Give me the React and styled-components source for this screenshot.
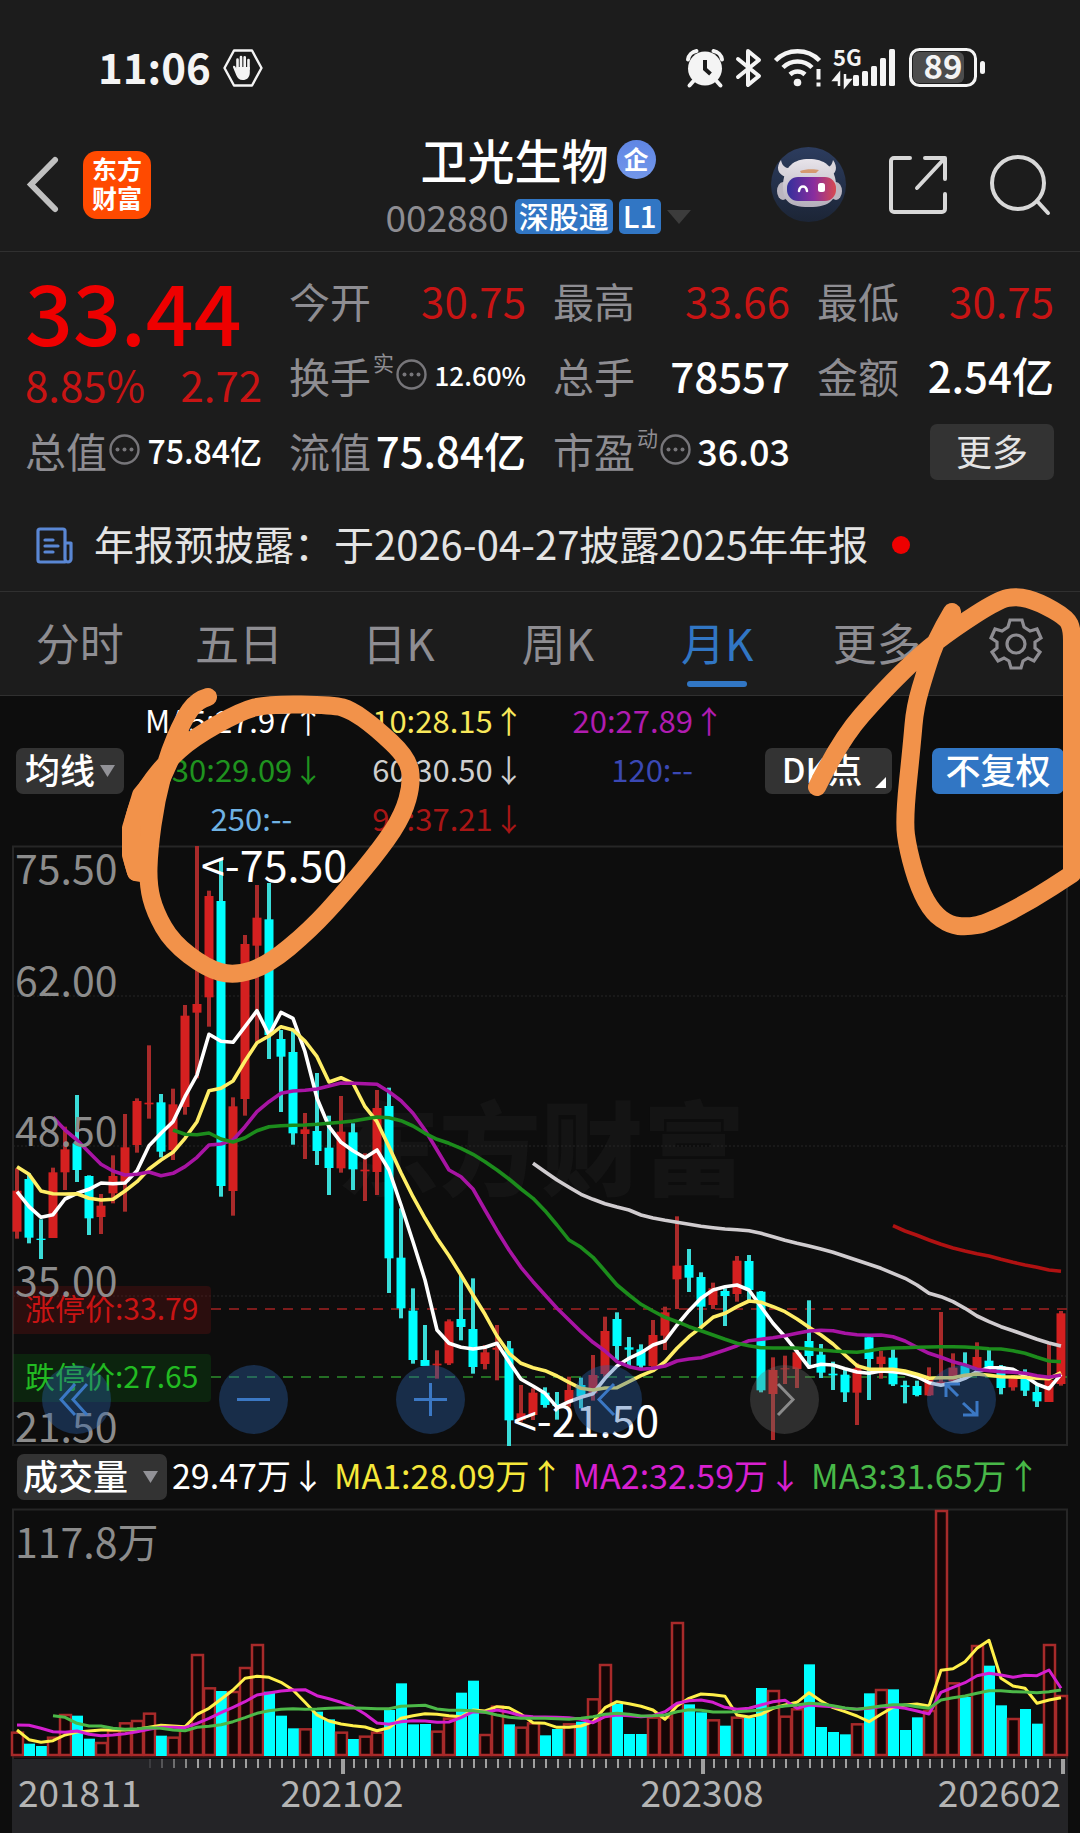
import React from "react";
import styled, { createGlobalStyle } from "styled-components";

const FONT = '"Noto Sans CJK SC", "Noto Sans", sans-serif';

const C = {
  panel: "#1c1c1c",
  board: "#0d0d0d",
  line: "#303030",
  grey: "#8e8d92",
  light: "#e4e4e4",
  blue: "#3176c4",
  red: "#c81414",
  hot: "#ee0000",
  chip: "#333333",
};

const GlobalStyle = createGlobalStyle`
  *, *::before, *::after { box-sizing: border-box; }
  body { margin: 0; background: ${C.board}; }
  button, select { font: inherit; color: inherit; border: 0; padding: 0; margin: 0; background: none; cursor: pointer; }
  a { color: inherit; text-decoration: none; }
  svg { display: block; overflow: visible; }
`;

/* ---------- market data ---------- */

// high, body top, body bottom, low (thirds of a pixel below the 63.41 level), u = up month, d = down month
const CANDLES = `565 632 755 776 u|580 597 773 790 d|718 776 780 837 d|563 577 774 774 u|440 508 577 630 u|345 490 570 606 d|586 588 715 765 d|642 677 711 762 u|526 588 640 670 u|402 502 605 695 u|355 363 495 518 u|196 368 373 416 u|342 367 515 532 d|326 373 510 540 u|75 107 381 404 u|-402 72 98 295 u|-268 -252 52 140 u|-365 -237 618 650 d|352 379 633 707 u|-135 -108 357 407 u|-285 -187 -103 185 u|-291 -182 165 237 d|150 177 230 396 d|150 216 460 494 d|399 448 462 537 u|279 453 513 555 d|407 503 564 645 d|348 455 565 578 u|430 457 568 630 d|520 569 574 663 u|330 384 576 645 u|323 378 835 939 d|685 833 985 1015 d|925 992 1140 1151 d|1035 1140 1158 1158 d|1111 1151 1156 1196 u|1018 1024 1150 1155 u|885 1017 1041 1081 d|895 1047 1161 1181 d|1095 1117 1152 1168 u|1035 1103 1109 1201 u|1083 1105 1321 1398 d|1215 1300 1320 1325 u|1225 1238 1305 1320 u|1222 1238 1275 1283 d|1236 1272 1278 1319 d|1190 1230 1265 1280 u|1193 1215 1250 1285 d|1125 1185 1240 1262 u|1010 1053 1182 1190 u|997 1017 1098 1140 d|1071 1102 1109 1160 d|1093 1108 1157 1165 d|1020 1065 1158 1165 u|980 997 1067 1110 u|709 857 898 987 u|807 855 893 936 d|877 891 980 1045 d|908 925 975 987 u|925 933 948 1038 d|828 842 942 965 u|825 843 930 965 d|933 935 1231 1237 d|1132 1170 1242 1380 u|1127 1165 1168 1212 u|1110 1117 1167 1224 u|961 1083 1128 1165 d|1092 1124 1178 1194 d|1145 1181 1186 1230 d|1165 1184 1237 1266 d|1150 1165 1238 1335 u|1072 1072 1137 1260 d|1112 1130 1152 1196 u|1102 1133 1213 1218 d|1202 1216 1221 1270 d|1202 1218 1245 1249 d|1162 1197 1246 1248 u|996 1205 1210 1215 u|1120 1163 1203 1205 u|1117 1158 1185 1190 d|1087 1131 1170 1180 u|1108 1142 1168 1172 d|1155 1158 1224 1243 d|1185 1195 1222 1232 u|1168 1190 1232 1248 d|1215 1236 1264 1281 d|1090 1200 1266 1266 u|993 1000 1212 1217 u`
  .split("|")
  .map((row) => {
    const [high, top, bottom, low, dir] = row.split(" ");
    return { high: +high, top: +top, bottom: +bottom, low: +low, up: dir === "u" };
  });

const list = (s) => s.split(" ").map(Number);

const PRICE_LINES = [
  { color: "#d0cccf", from: 43, v: list("550 575 600 622 643 658 671 681 690 705 714 721 727 733 739 743 747 749 752 760 770 781 790 798 807 817 829 841 853 865 880 895 915 940 950 965 985 1008 1025 1040 1052 1065 1078 1089 1098") },
  { color: "#b01212", from: 73, v: list("737 753 766 780 793 804 813 821 828 838 847 855 862 870 874") },
  { color: "#ffffff", from: 0, v: list("635 680 712 704 657 640 628 609 611 609 572 497 460 425 350 285 163 184 187 140 92 165 97 115 215 355 440 487 512 533 510 570 675 785 900 1050 1090 1102 1107 1102 1090 1145 1198 1218 1240 1282 1265 1252 1241 1195 1158 1135 1118 1095 1083 1035 992 955 930 920 915 930 980 1030 1070 1115 1162 1153 1155 1166 1176 1180 1173 1175 1180 1190 1208 1216 1208 1195 1175 1163 1163 1168 1188 1213 1226 1183") },
  { color: "#ffee66", from: 0, v: list("560 583 633 641 642 641 655 660 658 633 605 567 540 517 475 425 332 325 303 243 188 168 140 150 183 230 306 293 310 380 425 500 578 650 715 775 827 885 945 1003 1068 1120 1150 1163 1172 1188 1207 1225 1230 1224 1223 1205 1187 1172 1145 1105 1070 1042 1012 1000 980 963 967 980 995 1017 1042 1065 1092 1125 1157 1168 1168 1168 1173 1183 1195 1193 1193 1186 1182 1186 1190 1191 1192 1195 1196 1178") },
  { color: "#a814a4", from: 3, v: list("412 450 480 517 553 573 585 583 576 587 580 560 532 495 492 480 440 395 365 340 333 331 327 318 309 310 311 313 335 362 400 450 510 570 590 627 690 752 810 862 905 945 985 1020 1055 1087 1113 1145 1160 1168 1165 1158 1143 1137 1133 1122 1110 1097 1082 1078 1073 1067 1060 1053 1051 1052 1060 1064 1066 1065 1070 1083 1102 1120 1132 1145 1155 1168 1172 1175 1177 1180 1187 1192 1185") },
  { color: "#1c8c1c", from: 13, v: list("450 463 464 459 477 486 473 452 440 437 436 435 433 430 427 423 417 411 413 422 438 460 478 490 505 523 545 570 597 627 655 692 735 780 802 832 873 915 945 973 993 1012 1025 1040 1052 1065 1078 1090 1097 1103 1104 1104 1104 1107 1110 1113 1115 1117 1112 1106 1104 1103 1102 1101 1100 1100 1101 1103 1106 1107 1112 1120 1132 1143 1145") },
];

const VOLUMES = list("845 881 888 860 792 797 866 876 840 817 810 788 857 860 837 612 712 723 723 651 582 725 797 835 835 785 808 845 867 857 845 780 700 823 822 842 803 728 692 852 767 823 830 817 856 837 820 815 745 642 762 852 852 800 800 516 763 787 808 827 800 803 714 720 797 775 643 831 846 853 820 730 717 718 840 802 780 180 697 741 585 647 766 804 777 821 582 735");

const VOLUME_LINES = [
  { color: "#fff04a", from: 0, v: list("840 869 877 872 855 846 843 840 840 840 838 832 826 828 830 793 775 748 720 685 679 682 697 720 757 795 813 822 827 831 842 833 805 797 791 793 797 800 780 783 770 773 793 818 820 832 832 828 815 773 755 761 769 780 808 768 745 732 734 739 795 801 793 775 765 757 728 753 773 785 798 815 793 772 765 762 768 661 656 635 595 571 685 708 715 760 750 743") },
  { color: "#d41fd0", from: 0, v: list("825 826 835 845 847 843 853 857 855 851 845 838 832 832 833 820 805 788 772 755 735 729 723 720 719 737 746 757 770 792 819 823 815 812 813 817 816 803 785 787 780 787 797 800 801 802 803 808 818 800 795 797 800 797 785 760 752 750 757 772 778 775 765 755 751 775 765 768 770 775 778 775 770 770 775 783 792 727 712 698 677 670 675 682 676 677 660 715") },
  { color: "#4cb848", from: 3, v: list("797 802 820 828 828 835 838 836 833 835 840 842 832 829 824 815 803 790 782 778 776 778 777 775 773 774 775 776 776 769 767 766 777 781 781 782 787 795 802 805 805 805 806 808 805 800 793 790 793 798 797 795 785 779 781 786 786 785 783 780 773 768 765 760 762 767 774 778 773 768 764 764 770 775 750 743 738 730 722 722 725 726 728 725 720") },
];

const xAt = (i) => 17 + i * 12;
const priceY = (v) => 136 + v / 3;
const volumeY = (v) => v / 3 - 58;
const points = (line, y) => line.v.map((v, k) => `${xAt(line.from + k)},${y(v).toFixed(1)}`).join(" ");

/* ---------- page parts ---------- */

const Page = styled.main`
  position: relative;
  background: ${C.board};
  color: #fff;
  font-family: ${FONT};
  overflow: hidden;
`;

const Row = styled.div`
  display: flex;
  align-items: center;
  gap: ${(p) => p.$gap || 0}px;
`;

const StatusBar = styled.div`
  display: flex;
  align-items: center;
  justify-content: space-between;
  height: 115px;
  padding: 20px 94px 0 98px;
  background: ${C.panel};
`;

const Clock = styled.time`
  padding-bottom: 4px;
  font-size: 42px;
  font-weight: 700;
  line-height: 48px;
  color: #f4f4f4;
`;

const Header = styled.header`
  display: grid;
  grid-template-columns: 1fr auto 1fr;
  align-items: center;
  padding: 20px 30px 17px 26px;
  background: ${C.panel};
  border-bottom: 1px solid ${C.line};
`;

const HeaderSide = styled.div`
  display: flex;
  align-items: center;
  justify-content: ${(p) => (p.$end ? "flex-end" : "flex-start")};
  gap: ${(p) => (p.$end ? 43 : 24)}px;
`;

const IconButton = styled.button`
  display: flex;
  align-items: center;
  justify-content: center;
`;

const Logo = styled.a`
  display: flex;
  flex-direction: column;
  align-items: center;
  justify-content: center;
  width: 68px;
  height: 68px;
  padding-bottom: 4px;
  border-radius: 14px;
  background: #ff4a00;
  font-size: 25px;
  font-weight: 700;
  line-height: 29px;
`;

const Titles = styled.div`
  display: flex;
  flex-direction: column;
  align-items: center;
  gap: 16px;
`;

const Title = styled.h1`
  margin: 0;
  font-size: 47px;
  font-weight: 500;
  line-height: 48px;
`;

const Badge = styled.span`
  width: 39px;
  height: 39px;
  border-radius: 50%;
  background: linear-gradient(#5f86e4, #7397ea);
  font-size: 25px;
  font-weight: 700;
  line-height: 37px;
  text-align: center;
`;

const Code = styled.span`
  color: ${C.grey};
  font-size: 37px;
  line-height: 35px;
`;

const Tag = styled.span`
  padding: 0 4px 2px;
  border-radius: 5px;
  background: ${C.blue};
  font-size: 30px;
  font-weight: 500;
  line-height: 33px;
`;

const Quote = styled.section`
  display: grid;
  grid-template-columns: repeat(4, 1fr);
  grid-auto-rows: 75px;
  column-gap: 27px;
  padding: 12px 26px 0 25px;
  background: ${C.panel};
`;

const Last = styled.div`
  grid-row: span 2;
  display: flex;
  flex-direction: column;
`;

const Price = styled.strong`
  color: ${C.hot};
  font-size: 84px;
  font-weight: 500;
  line-height: 92px;
`;

const Change = styled.div`
  display: flex;
  justify-content: space-between;
  color: ${C.red};
  font-size: 42px;
  line-height: 56px;
`;

const Cell = styled.div`
  display: flex;
  align-items: center;
  justify-content: space-between;
  white-space: nowrap;
`;

const Label = styled.span`
  display: flex;
  align-items: center;
  gap: 2px;
  color: ${C.grey};
  font-size: 41px;
  line-height: 48px;
  padding-bottom: 4px;
`;

const Sup = styled.sup`
  align-self: flex-start;
  font-size: 21px;
  line-height: 22px;
  vertical-align: baseline;
`;

const Value = styled.span`
  color: ${(p) => (p.$up ? C.red : "#fff")};
  font-size: ${(p) => p.$size || 42}px;
  font-weight: ${(p) => (p.$up ? 400 : 500)};
  line-height: 48px;
  padding-bottom: 4px;
`;

const MoreButton = styled.button`
  width: 124px;
  height: 56px;
  margin-left: auto;
  padding-bottom: 4px;
  border-radius: 7px;
  background: ${C.chip};
  color: ${C.light};
  font-size: 36px;
  line-height: 50px;
`;

const Notice = styled.a`
  display: flex;
  align-items: center;
  height: 103px;
  padding: 10px 36px 0;
  background: ${C.panel};
  border-bottom: 1px solid ${C.line};
  color: ${C.light};
  font-size: 40px;
  line-height: 48px;
  white-space: nowrap;
`;

const NoticeText = styled.span`
  padding: 0 24px 4px 21px;
`;

const Dot = styled.span`
  width: 18px;
  height: 18px;
  border-radius: 50%;
  background: ${C.hot};
`;

const Tabs = styled.nav`
  display: grid;
  grid-template-columns: repeat(6, 4fr) 3fr;
  height: 104px;
  padding-right: 4px;
  background: ${C.panel};
  border-bottom: 1px solid ${C.line};
`;

const Tab = styled.button`
  display: flex;
  align-items: center;
  justify-content: center;
  position: relative;
  padding-bottom: 4px;
  color: ${(p) => (p.$active ? C.blue : C.grey)};
  font-size: 44px;
  line-height: 48px;

  &::after {
    content: "";
    display: ${(p) => (p.$active ? "block" : "none")};
    position: absolute;
    bottom: 8px;
    width: 60px;
    height: 6px;
    border-radius: 3px;
    background: ${C.blue};
  }
`;

const Indicators = styled.section`
  display: flex;
  align-items: center;
  padding: 1px 16px 0;
`;

const Averages = styled.div`
  flex: 1;
  display: grid;
  grid-template-columns: repeat(3, 1fr);
  grid-auto-rows: 49px;
  align-items: center;
`;

const Average = styled.span`
  display: flex;
  justify-content: flex-end;
  padding-bottom: 4px;
  color: ${(p) => p.$color};
  font-size: 31px;
  line-height: 40px;
  white-space: nowrap;
`;

const Arrow = styled.span`
  width: 32px;
  text-align: center;
`;

const Picker = styled.label`
  display: flex;
  align-items: center;
  position: relative;
  width: ${(p) => p.$width}px;
  height: 46px;
  border-radius: 7px;
  background: ${C.chip};

  svg {
    position: absolute;
    right: 9px;
    pointer-events: none;
  }
`;

const Select = styled.select`
  appearance: none;
  width: 100%;
  height: 58px;
  padding: 0 0 4px ${(p) => p.$pad}px;
  font-size: 35px;
  font-weight: 500;
  line-height: 54px;
`;

const ModeButton = styled.button`
  position: relative;
  width: ${(p) => p.$width}px;
  height: 46px;
  margin-left: 40px;
  padding: 0 ${(p) => (p.$blue ? 0 : 13)}px 4px 0;
  border-radius: 7px;
  background: ${(p) => (p.$blue ? C.blue : C.chip)};
  font-size: ${(p) => (p.$blue ? 35 : 34)}px;
  font-weight: 500;
  line-height: 42px;

  svg {
    position: absolute;
    right: 6px;
    bottom: 6px;
  }
`;

const ChartBox = styled.section`
  position: relative;
`;

const Chart = styled.svg`
  width: 100%;
  height: auto;
  font-family: ${FONT};
`;

const Scale = styled.text`
  fill: #8c8c8c;
  font-size: 41px;
`;

const Mark = styled.text`
  fill: #fff;
  font-size: 43px;
`;

const Limit = styled.text`
  fill: ${(p) => p.$color};
  font-size: 30px;
`;

const Watermark = styled.text`
  fill: #141414;
  font-size: 102px;
  font-weight: 900;
`;

const DateText = styled.text`
  fill: #b4b4b4;
  font-size: 37px;
`;

const ChartTools = styled.div`
  position: absolute;
  left: 0;
  right: 0;
  bottom: 12px;
  display: flex;
  justify-content: space-between;
  padding: 0 84px 0 42px;
`;

const Tool = styled.button`
  width: 69px;
  height: 69px;
  border-radius: 50%;
  background: ${(p) => (p.$off ? "rgba(110, 110, 110, 0.35)" : "rgba(42, 98, 170, 0.38)")};
  color: ${(p) => (p.$off ? "#8a8a8a" : "#3b78c4")};
`;

const VolumeHead = styled.section`
  display: flex;
  align-items: center;
  gap: 9px;
  height: 62px;
  padding: 0 17px;
  white-space: nowrap;
`;

const VolumeValue = styled.span`
  margin-left: ${(p) => (p.$first ? -4 : 0)}px;
  padding-bottom: 4px;
  color: ${(p) => p.$color};
  font-size: 34px;
  line-height: 48px;
`;

const Ink = styled.svg`
  position: absolute;
  top: 0;
  left: 0;
  width: 100%;
  pointer-events: none;
`;

/* ---------- icons ---------- */

const DndIcon = () => (
  <svg width="40" height="38" viewBox="0 0 40 38" fill="none">
    <path d="M11 1.500h18L38.500 19 29 36.500H11L1.500 19z" stroke="#f4f4f4" strokeWidth="2.400" strokeLinejoin="round" />
    <path d="M14.500 21.500V10.500M18 19V8M21.700 19V8.300M25.500 20V11" stroke="#f4f4f4" strokeWidth="2.600" strokeLinecap="round" />
    <path d="M13.200 18h13.600v5.500c0 5-3 7.500-7 7.500-3.500 0-5.200-2-6.500-4.800L10 18.200c-.4-1.400 1.300-2.200 2.100-.9l1.600 3z" fill="#f4f4f4" />
  </svg>
);

const AlarmIcon = () => (
  <svg width="38" height="38" viewBox="0 0 38 38">
    <circle cx="19" cy="19.500" r="17" fill="#f4f4f4" />
    <path d="M2 10.500A10 10 0 0 1 10.500 2M27.500 2A10 10 0 0 1 36 10.500" stroke="#f4f4f4" strokeWidth="4" fill="none" strokeLinecap="round" />
    <path d="M7.500 32l-4 4.500M30.500 32l4 4.500" stroke="#f4f4f4" strokeWidth="4" strokeLinecap="round" />
    <path d="M19 11v9l5.500 5" stroke={C.panel} strokeWidth="4" fill="none" />
  </svg>
);

const BluetoothIcon = () => (
  <svg width="26" height="38" viewBox="0 0 26 38" fill="none" stroke="#f4f4f4" strokeWidth="4" strokeLinejoin="round" strokeLinecap="round">
    <path d="M2 10l21 17-11 9V2l11 9L2 28" />
  </svg>
);

const WifiIcon = () => (
  <svg width="48" height="38" viewBox="0 0 48 38" fill="none" stroke="#f4f4f4" strokeWidth="4.500">
    <path d="M1.500 11.500a31 31 0 0 1 44 0M9 18.500a20.500 20.500 0 0 1 29 0M16 25.500a11 11 0 0 1 15 0" />
    <circle cx="23.500" cy="33.500" r="3.800" fill="#f4f4f4" stroke="none" />
    <path d="M44.500 20v10.500M44.500 33.500v4" strokeWidth="4" />
  </svg>
);

const SignalText = styled.text`
  fill: #f4f4f4;
  font: 700 22px ${FONT};
`;

const SignalIcon = () => (
  <svg width="63" height="39" viewBox="0 0 63 39">
    <SignalText x="-1" y="18">5G</SignalText>
    <path d="M5 38V26l-5 6h5M11 26v12l5-6h-5" stroke="#f4f4f4" strokeWidth="2.500" fill="#f4f4f4" />
    {[[19, 27], [28, 23], [37, 18], [46, 10], [55, 1]].map(([x, y]) => (
      <rect key={x} x={x} y={y} width="6" height={38 - y} rx="1.500" fill="#f4f4f4" />
    ))}
  </svg>
);

const BatteryText = styled.text`
  fill: #f4f4f4;
  font: 700 33px ${FONT};
`;

const BatteryIcon = () => (
  <svg width="77" height="39" viewBox="0 0 77 39">
    <rect x="4" y="4" width="51" height="31" rx="6" fill="#4c4c4c" />
    <rect x="1.500" y="1.500" width="65" height="36" rx="9" fill="none" stroke="#f4f4f4" strokeWidth="3" />
    <rect x="71" y="13" width="5" height="13" rx="2.500" fill="#f4f4f4" />
    <BatteryText x="34" y="31" textAnchor="middle">89</BatteryText>
  </svg>
);

const BackIcon = () => (
  <svg width="33" height="57" viewBox="0 0 33 57" fill="none" stroke="#c0c0c0" strokeWidth="6" strokeLinecap="round">
    <path d="M29 4L5 28.500 29 53" />
  </svg>
);

const RobotIcon = () => (
  <svg width="75" height="75" viewBox="0 0 75 75">
    <defs>
      <linearGradient id="sky" x1="0" y1="0" x2="0" y2="1">
        <stop offset="0" stopColor="#2c3c5e" />
        <stop offset="1" stopColor="#1c2536" />
      </linearGradient>
      <linearGradient id="visor" x1="0" y1="0" x2="1" y2="0">
        <stop offset="0" stopColor="#33309c" />
        <stop offset="0.550" stopColor="#8a2d9e" />
        <stop offset="1" stopColor="#d84a50" />
      </linearGradient>
      <linearGradient id="shell" x1="0" y1="0" x2="0" y2="1">
        <stop offset="0" stopColor="#e8e4ea" />
        <stop offset="1" stopColor="#b4afbb" />
      </linearGradient>
    </defs>
    <circle cx="37.500" cy="37.500" r="37.500" fill="url(#sky)" />
    <path d="M10 13c-5 7-4 14 5 17l6-9c-6 1-10-2-11-8zM62 13c5 7 4 14-5 17l-6-9c6 1 10-2 11-8z" fill="#d9d5dc" />
    <ellipse cx="12" cy="44" rx="6" ry="9" fill="#bbb6c0" />
    <ellipse cx="65" cy="44" rx="6" ry="9" fill="#bbb6c0" />
    <path d="M38 12c15 0 25 7 27 24 1 16-5 24-27 24s-27-8-26-24c2-17 11-24 26-24z" fill="url(#shell)" />
    <rect x="16" y="30" width="49" height="24" rx="11" fill="url(#visor)" />
    <path d="M28 44c1-6 7-6 8 0" stroke="#fff" strokeWidth="2.500" fill="none" strokeLinecap="round" />
    <rect x="47" y="36" width="7" height="9" rx="2.500" fill="#fff" />
    <path d="M29 24c5-2 14-2 19-1l-3 3H30z" fill="#d69a70" />
  </svg>
);

const ShareIcon = () => (
  <svg width="58" height="58" viewBox="0 0 58 58" fill="none" stroke="#d8d8d8" strokeWidth="4" strokeLinecap="round" strokeLinejoin="round">
    <path d="M21 2H5a3 3 0 0 0-3 3v48a3 3 0 0 0 3 3h48a3 3 0 0 0 3-3V38M36 2h20v21M55 3L28 32" />
  </svg>
);

const SearchIcon = () => (
  <svg width="60" height="60" viewBox="0 0 60 60" fill="none" stroke="#d8d8d8" strokeWidth="4" strokeLinecap="round">
    <circle cx="28" cy="28" r="26" />
    <path d="M47 46l11 12" />
  </svg>
);

const InfoIcon = () => (
  <svg width="31" height="31" viewBox="0 0 31 31" fill="#77767a">
    <circle cx="15.500" cy="15.500" r="14" fill="none" stroke="#77767a" strokeWidth="2.400" />
    <circle cx="8.500" cy="15.500" r="2" />
    <circle cx="15.500" cy="15.500" r="2" />
    <circle cx="22.500" cy="15.500" r="2" />
  </svg>
);

const NewsIcon = () => (
  <svg width="37" height="37" viewBox="0 0 37 37" fill="none" stroke="#5a87d4" strokeWidth="3.200" strokeLinejoin="round" strokeLinecap="round">
    <path d="M29 35H4a2 2 0 0 1-2-2V4a2 2 0 0 1 2-2h23a2 2 0 0 1 2 2v28a3 3 0 0 0 6 0V16h-5M9 13h8M9 19h13M9 25h8" />
  </svg>
);

const GearIcon = () => (
  <svg width="52" height="52" viewBox="-26 -26 52 52" fill="none" stroke={C.grey} strokeWidth="3.200">
    <path d="M-6-24H6L8-17 14-13 21-15 25-6 19-2V4L24 8 18 17 12 14 7 17 5 24H-5L-7 17-12 14-18 17-24 8-19 4V-2L-25-6-21-15-14-13-8-17z" />
    <circle r="9" />
  </svg>
);

const Caret = ({ width = 15, height = 12, color = "#929297" }) => (
  <svg width={width} height={height} viewBox="0 0 15 12" preserveAspectRatio="none">
    <path d="M0 0h15L7.500 12z" fill={color} />
  </svg>
);

const TOOLS = [
  { name: "最早", d: "M33 19L19 34.500 33 50M45 19L31 34.500 45 50" },
  { name: "缩小", d: "M18 34.500H51" },
  { name: "放大", d: "M18 34.500H51M34.500 18V51" },
  { name: "上一页", d: "M41 19L26 34.500 41 50" },
  { name: "下一页", d: "M28 19L43 34.500 28 50", off: true },
  { name: "全屏", d: "M19 32V19H33M20 20L31 31M36 38L49 50M50 36V50H36" },
];

/* ---------- hand-drawn rings ---------- */

const LEFT_RING = [[208, 697], [197, 700], [183, 720], [168, 755], [156, 800], [149, 850], [148, 885], [155, 912], [172, 942], [206, 968], [234, 976], [268, 965], [310, 930], [344, 893], [382, 847], [403, 815], [412, 783], [408, 758], [375, 727], [351, 710], [334, 705], [268, 704], [241, 711], [193, 738], [166, 762], [141, 795], [131, 828], [131, 855], [136, 872]];
const RIGHT_RING = [[817, 787], [840, 740], [884, 690], [922, 653], [953, 629], [998, 600], [1017, 596], [1039, 602], [1067, 618], [1072, 630], [1072, 650], [1072, 874], [1072, 874], [1032, 900], [988, 923], [967, 927], [950, 925], [933, 913], [919, 888], [908, 850], [904, 820], [912, 743], [915, 707], [926, 670], [936, 640], [952, 612]];

function smooth(pts) {
  let d = `M${pts[0][0]} ${pts[0][1]}`;
  for (let i = 1; i < pts.length - 1; i += 1) {
    const [x, y] = pts[i];
    const [nx, ny] = pts[i + 1];
    d += `Q${x} ${y} ${(x + nx) / 2} ${(y + ny) / 2}`;
  }
  const end = pts[pts.length - 1];
  return `${d}L${end[0]} ${end[1]}`;
}

/* ---------- charts ---------- */

function PriceChart() {
  return (
    <Chart viewBox="0 0 1080 602" role="img" aria-label="月K线">
      <Watermark x="337" y="344">东方财富</Watermark>
      <g stroke="#262626" strokeWidth="2" fill="none">
        <path d="M13 602V2.500H1067V602" />
        <path d="M12 601H1068" />
        <path d="M13 152H1067M13 302H1067M13 452H1067" strokeDasharray="2 2" strokeWidth="1" />
      </g>
      <path d="M211 465H1067" stroke="#a32222" strokeWidth="1.500" strokeDasharray="10 8" />
      <path d="M211 533H1067" stroke="#2c8f2c" strokeWidth="1.500" strokeDasharray="10 8" />
      {CANDLES.map((c, i) => (
        <g key={i}>
          <rect x={xAt(i) - 2} y={priceY(c.high)} width="4" height={(c.low - c.high) / 3} fill={c.up ? "#a92a2a" : "#3adcd8"} />
          <rect x={xAt(i) - 4.5} y={priceY(c.top)} width="9" height={(c.bottom - c.top) / 3} fill={c.up ? "#d42020" : "#00ffff"} />
        </g>
      ))}
      <path d="M13 442H207a4 4 0 0 1 4 4V486a4 4 0 0 1-4 4H13z" fill="rgba(150, 16, 16, 0.22)" />
      <path d="M13 510H207a4 4 0 0 1 4 4V554a4 4 0 0 1-4 4H13z" fill="rgba(10, 120, 16, 0.22)" />
      {PRICE_LINES.map((line) => (
        <polyline key={line.color} points={points(line, priceY)} fill="none" stroke={line.color} strokeWidth="3.600" strokeLinejoin="round" />
      ))}
      <Limit x="25" y="476" $color={C.red}>涨停价:33.79</Limit>
      <Limit x="25" y="544" $color="#22bb22">跌停价:27.65</Limit>
      <Scale x="15" y="40">75.50</Scale>
      <Scale x="15" y="152">62.00</Scale>
      <Scale x="15" y="302">48.50</Scale>
      <Scale x="15" y="452">35.00</Scale>
      <Scale x="15" y="598">21.50</Scale>
      <Mark x="201" y="38">&lt;-75.50</Mark>
      <Mark x="513" y="593">&lt;-21.50</Mark>
    </Chart>
  );
}

function VolumeChart() {
  return (
    <Chart viewBox="0 0 1080 325" role="img" aria-label="成交量">
      <path d="M13 251V1.500H1067V251" fill="none" stroke="#262626" strokeWidth="2" />
      <rect x="12" y="251" width="1056" height="74" fill="#242427" />
      <Scale x="15" y="50">117.8万</Scale>
      {VOLUMES.map((v, i) =>
        CANDLES[i].up ? (
          <rect key={i} x={xAt(i) - 5} y={volumeY(v) + 1} width="11" height={246 - volumeY(v)} fill="#140606" stroke="#a82a2a" strokeWidth="2.500" />
        ) : (
          <rect key={i} x={xAt(i) - 5} y={volumeY(v)} width="11" height={248 - volumeY(v)} fill="#00ffff" />
        )
      )}
      <path d="M12 249H1068" stroke="#5a1818" strokeWidth="1" />
      {VOLUME_LINES.map((line) => (
        <polyline key={line.color} points={points(line, volumeY)} fill="none" stroke={line.color} strokeWidth="3" strokeLinejoin="round" />
      ))}
      {VOLUMES.map((v, i) => {
        const major = i === 27 || i === 57 || i === 87;
        return i < 11 ? null : (
          <rect key={i} x={xAt(i)} y="251" width={major ? 4 : 2} height={major ? 15 : 9} fill="#a0a0a0" opacity={Math.min(1, (i - 10) / 5)} />
        );
      })}
      <DateText x="18" y="299">201811</DateText>
      <DateText x="342" y="299" textAnchor="middle">202102</DateText>
      <DateText x="702" y="299" textAnchor="middle">202308</DateText>
      <DateText x="1061" y="299" textAnchor="end">202602</DateText>
    </Chart>
  );
}

const TABS = ["分时", "五日", "日K", "周K", "月K", "更多"];

const AVERAGES = [
  ["MA5:27.97", "↑", "#ffffff"],
  ["10:28.15", "↑", "#f8e85a"],
  ["20:27.89", "↑", "#b01cb0"],
  ["30:29.09", "↓", "#1f931f"],
  ["60:30.50", "↓", "#cfcfcf"],
  ["120:--", "", "#3a48b4"],
  ["250:--", "", "#6fb2e4"],
  ["90:37.21", "↓", "#a81616"],
];

export default function App() {
  return (
    <Page>
      <GlobalStyle />
      <StatusBar>
        <Row $gap={12}>
          <Clock>11:06</Clock>
          <DndIcon />
        </Row>
        <Row $gap={12}>
          <AlarmIcon />
          <BluetoothIcon />
          <WifiIcon />
          <SignalIcon />
          <BatteryIcon />
        </Row>
      </StatusBar>

      <Header>
        <HeaderSide>
          <IconButton aria-label="返回"><BackIcon /></IconButton>
          <Logo href="#home"><span>东方</span><span>财富</span></Logo>
        </HeaderSide>
        <Titles>
          <Row $gap={8}>
            <Title>卫光生物</Title>
            <Badge>企</Badge>
          </Row>
          <Row $gap={6}>
            <Code>002880</Code>
            <Tag>深股通</Tag>
            <Tag>L1</Tag>
            <IconButton aria-label="切换"><Caret width={24} height={14} color="#3c3c3c" /></IconButton>
          </Row>
        </Titles>
        <HeaderSide $end>
          <IconButton aria-label="助手"><RobotIcon /></IconButton>
          <IconButton aria-label="分享"><ShareIcon /></IconButton>
          <IconButton aria-label="搜索"><SearchIcon /></IconButton>
        </HeaderSide>
      </Header>

      <Quote>
        <Last>
          <Price>33.44</Price>
          <Change><span>8.85%</span><span>2.72</span></Change>
        </Last>
        <Cell><Label>今开</Label><Value $up>30.75</Value></Cell>
        <Cell><Label>最高</Label><Value $up>33.66</Value></Cell>
        <Cell><Label>最低</Label><Value $up>30.75</Value></Cell>
        <Cell><Label>换手<Sup>实</Sup><InfoIcon /></Label><Value $size={26}>12.60%</Value></Cell>
        <Cell><Label>总手</Label><Value>78557</Value></Cell>
        <Cell><Label>金额</Label><Value>2.54亿</Value></Cell>
        <Cell><Label>总值<InfoIcon /></Label><Value $size={32}>75.84亿</Value></Cell>
        <Cell><Label>流值</Label><Value>75.84亿</Value></Cell>
        <Cell><Label>市盈<Sup>动</Sup><InfoIcon /></Label><Value $size={36}>36.03</Value></Cell>
        <Cell><MoreButton>更多</MoreButton></Cell>
      </Quote>

      <Notice href="#notice">
        <NewsIcon />
        <NoticeText>年报预披露：于2026-04-27披露2025年年报</NoticeText>
        <Dot />
      </Notice>

      <Tabs>
        {TABS.map((name) => (
          <Tab key={name} $active={name === "月K"}>{name}</Tab>
        ))}
        <IconButton aria-label="设置"><GearIcon /></IconButton>
      </Tabs>

      <Indicators>
        <Picker $width={108}>
          <Select $pad={9} aria-label="主图指标"><option>均线</option></Select>
          <Caret />
        </Picker>
        <Averages>
          {AVERAGES.map(([text, arrow, color]) => (
            <Average key={text} $color={color}>{text}<Arrow>{arrow}</Arrow></Average>
          ))}
        </Averages>
        <ModeButton $width={127}>
          DK点
          <svg width="11" height="11" viewBox="0 0 11 11"><path d="M11 0V11H0z" fill="#fff" /></svg>
        </ModeButton>
        <ModeButton $width={132} $blue>不复权</ModeButton>
      </Indicators>

      <ChartBox>
        <PriceChart />
        <ChartTools>
          {TOOLS.map((t) => (
            <Tool key={t.name} $off={t.off} aria-label={t.name}>
              <svg width="69" height="69" viewBox="0 0 69 69" fill="none" stroke="currentColor" strokeWidth="3"><path d={t.d} /></svg>
            </Tool>
          ))}
        </ChartTools>
      </ChartBox>

      <VolumeHead>
        <Picker $width={150}>
          <Select $pad={6} aria-label="副图指标"><option>成交量</option></Select>
          <Caret />
        </Picker>
        <VolumeValue $first $color="#fff">29.47万↓</VolumeValue>
        <VolumeValue $color="#f6e83a">MA1:28.09万↑</VolumeValue>
        <VolumeValue $color="#d820d0">MA2:32.59万↓</VolumeValue>
        <VolumeValue $color="#48b848">MA3:31.65万↑</VolumeValue>
      </VolumeHead>
      <VolumeChart />

      <Ink viewBox="0 0 1080 1833" fill="none" stroke="#f2924a" strokeWidth="18" strokeLinecap="round" strokeLinejoin="round" aria-hidden="true">
        <path d={smooth(LEFT_RING)} />
        <path d="M170 760L152 800 148 850 148 874 136 872 131 855 131 828 141 795z" fill="#f2924a" />
        <path d={smooth(RIGHT_RING)} />
      </Ink>
    </Page>
  );
}
